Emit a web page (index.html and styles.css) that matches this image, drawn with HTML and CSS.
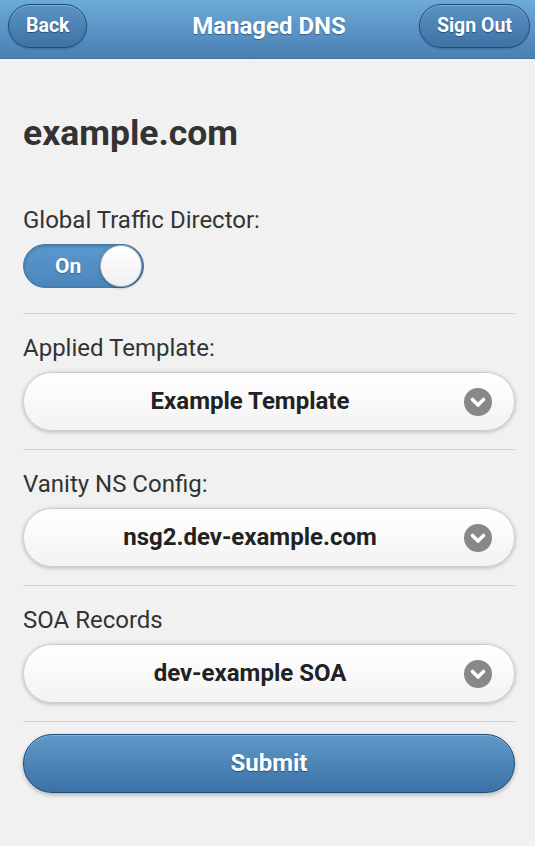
FILE: index.html
```html
<!DOCTYPE html>
<html lang="en">
<head>
  <meta charset="UTF-8" />
  <meta name="viewport" content="width=device-width, initial-scale=1.0" />
  <title>Managed DNS</title>
  <link rel="stylesheet" href="styles.css">
</head>
<body>
  <div class="header">
    <a class="hdr-btn left" href="#">Back</a>
    <h1>Managed DNS</h1>
    <a class="hdr-btn right" href="#">Sign Out</a>
  </div>

  <div class="content">
    <h2 class="zone">example.com</h2>

    <div class="field">
      <label>Global Traffic Director:</label>
      <div class="toggle">
        <span class="toggle-label">On</span>
        <span class="knob"></span>
      </div>
    </div>

    <div class="field">
      <label>Applied Template:</label>
      <div class="select">
        <span>Example Template</span>
        <svg class="arrow" width="28" height="28" viewBox="0 0 28 28">
          <circle cx="14" cy="14" r="14" fill="#888" />
          <path d="M8.5 11.5 L14 17 L19.5 11.5" fill="none" stroke="#fff" stroke-width="3.6" stroke-linecap="round" stroke-linejoin="round" />
        </svg>
      </div>
    </div>

    <div class="field">
      <label>Vanity NS Config:</label>
      <div class="select">
        <span>nsg2.dev-example.com</span>
        <svg class="arrow" width="28" height="28" viewBox="0 0 28 28">
          <circle cx="14" cy="14" r="14" fill="#888" />
          <path d="M8.5 11.5 L14 17 L19.5 11.5" fill="none" stroke="#fff" stroke-width="3.6" stroke-linecap="round" stroke-linejoin="round" />
        </svg>
      </div>
    </div>

    <div class="field">
      <label>SOA Records</label>
      <div class="select">
        <span>dev-example SOA</span>
        <svg class="arrow" width="28" height="28" viewBox="0 0 28 28">
          <circle cx="14" cy="14" r="14" fill="#888" />
          <path d="M8.5 11.5 L14 17 L19.5 11.5" fill="none" stroke="#fff" stroke-width="3.6" stroke-linecap="round" stroke-linejoin="round" />
        </svg>
      </div>
    </div>

    <div class="field last">
      <button class="submit">Submit</button>
    </div>
  </div>
</body>
</html>
```

FILE: styles.css
```css
body {
  margin: 0;
  font-family: Roboto, 'Liberation Sans', sans-serif;
  background: #f1f1f1;
  color: #333;
  min-height: 100vh;
}

.header {
  height: 59px;
  box-sizing: border-box;
  padding: 0 5px 6px 8px;
  display: grid;
  grid-template-columns: 1fr auto 1fr;
  align-items: center;
  background: linear-gradient(#6dabd8, #4a7fb4);
  border-bottom: 1px solid #44729f;
}

.header h1 {
  margin: 0;
  font-size: 24px;
  font-weight: 700;
  color: #fff;
  text-shadow: 0 1px 1px #2f5f8c;
}

.hdr-btn {
  display: block;
  height: 42px;
  line-height: 42px;
  padding: 0 17px;
  border-radius: 22px;
  border: 1px solid #1f4d79;
  background: linear-gradient(#5b93c3, #3f72a5);
  box-shadow: inset 0 1px 0 rgba(255,255,255,0.25), 0 1px 2px rgba(0,0,0,0.2);
  color: #fff;
  font-size: 19.5px;
  font-weight: 700;
  text-decoration: none;
  text-shadow: 0 1px 1px #244f78;
}

.hdr-btn.left { justify-self: start; }
.hdr-btn.right { justify-self: end; }

.content {
  padding: 53px 20px 0 23px;
}

.zone {
  margin: 0 0 51px;
  font-size: 35.5px;
  font-weight: 700;
  color: #333;
  line-height: 1.2;
}

.field {
  border-bottom: 1px solid #d2d2d2;
  padding-bottom: 18px;
  margin-bottom: 20px;
}

.field.last {
  border-bottom: none;
  margin-top: -8px;
}

.field label {
  display: block;
  font-size: 24px;
  line-height: 28px;
  margin-bottom: 10px;
}

.toggle {
  width: 121px;
  height: 44px;
  box-sizing: border-box;
  margin-bottom: 7px;
  border-radius: 22px;
  border: 1px solid #4578a8;
  background: linear-gradient(#5a98cc, #4b86bc);
  box-shadow: inset 0 1px 3px rgba(0,0,0,0.25);
  display: flex;
  align-items: center;
  justify-content: space-between;
  padding: 0 1px 0 31px;
}

.toggle-label {
  color: #fff;
  font-size: 21px;
  font-weight: 700;
  text-shadow: 0 1px 1px #2f5f8c;
}

.knob {
  width: 40px;
  height: 40px;
  border-radius: 50%;
  border: 1px solid #b0b0b0;
  background: linear-gradient(#ffffff, #f0f0f0);
  box-shadow: 0 1px 3px rgba(0,0,0,0.35);
}

.select {
  position: relative;
  height: 59px;
  box-sizing: border-box;
  padding-right: 38px;
  border-radius: 29px;
  border: 1px solid #cdcdcd;
  background: linear-gradient(#ffffff, #f3f3f3);
  box-shadow: 0 1px 4px rgba(0,0,0,0.25);
  display: flex;
  align-items: center;
  justify-content: center;
  font-size: 24px;
  font-weight: 700;
  color: #222;
}

.arrow {
  position: absolute;
  right: 22px;
  top: 15px;
}

.submit {
  display: block;
  width: 100%;
  height: 59px;
  border-radius: 29px;
  border: 1px solid #1d4b77;
  background: linear-gradient(#5e99c8, #3c71a6);
  box-shadow: inset 0 1px 0 rgba(255,255,255,0.25), 0 2px 4px rgba(0,0,0,0.25);
  color: #fff;
  font-family: inherit;
  font-size: 24px;
  font-weight: 700;
  text-shadow: 0 1px 1px #244f78;
}
```
